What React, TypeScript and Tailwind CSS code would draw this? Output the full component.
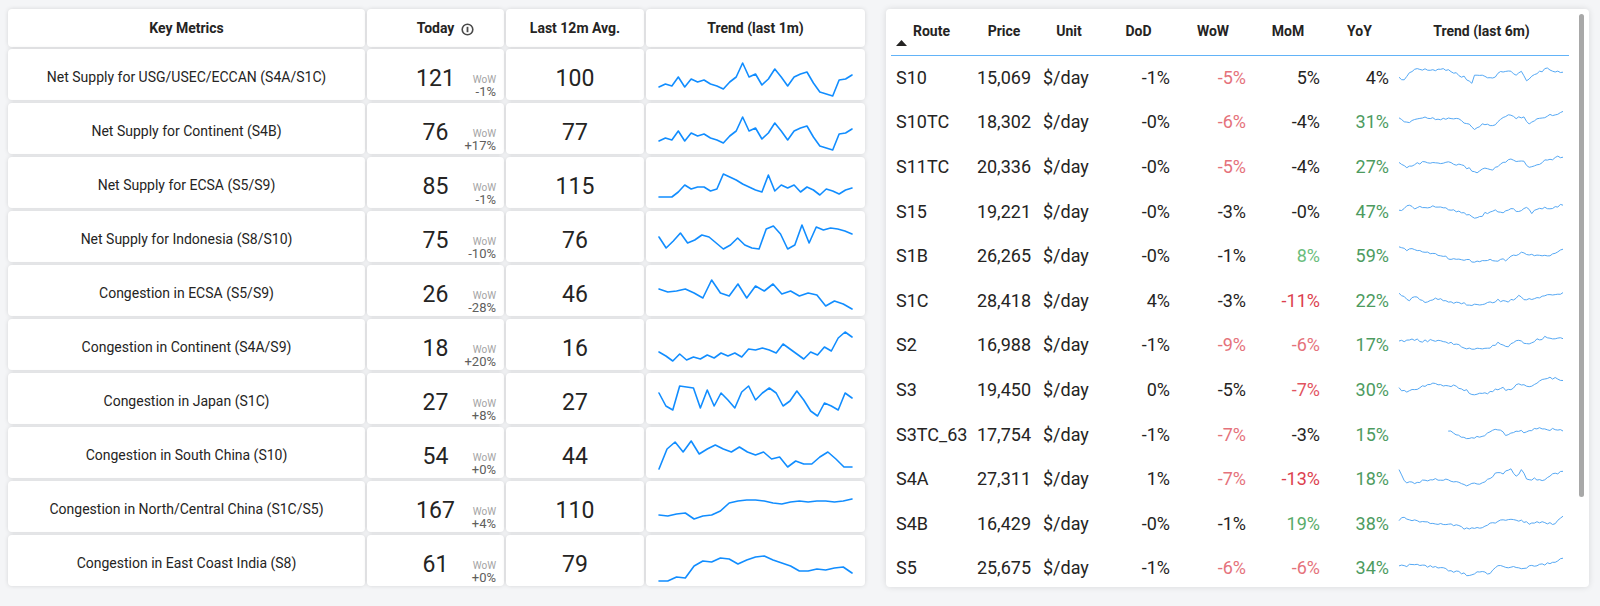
import React from 'react';

type Metric = { label: string; today: number; wow: string; avg: number; trend: number[] };

const metrics: Metric[] = [
  { label: 'Net Supply for USG/USEC/ECCAN (S4A/S1C)', today: 121, wow: '-1%', avg: 100, trend: [38, 35, 37, 28, 38, 30, 33, 31, 35, 37, 40, 33, 28, 14, 28, 25, 36, 30, 20, 28, 37, 28, 25, 23, 34, 43, 45, 47, 31, 30, 26] },
  { label: 'Net Supply for Continent (S4B)', today: 76, wow: '+17%', avg: 77, trend: [38, 35, 37, 28, 38, 30, 33, 31, 35, 37, 40, 33, 28, 14, 28, 25, 36, 30, 20, 28, 37, 28, 25, 23, 34, 43, 45, 47, 31, 30, 26] },
  { label: 'Net Supply for ECSA (S5/S9)', today: 85, wow: '-1%', avg: 115, trend: [40, 40, 40, 35, 28, 32, 30, 30, 34, 32, 17, 20, 23, 27, 30, 33, 35, 18, 34, 28, 31, 28, 35, 30, 33, 38, 32, 34, 37, 33, 31] },
  { label: 'Net Supply for Indonesia (S8/S10)', today: 75, wow: '-10%', avg: 76, trend: [26, 37, 30, 22, 32, 29, 24, 26, 32, 38, 34, 27, 34, 37, 38, 18, 15, 23, 38, 34, 14, 32, 16, 19, 17, 18, 20, 23] },
  { label: 'Congestion in ECSA (S5/S9)', today: 26, wow: '-28%', avg: 46, trend: [24, 27, 26, 24, 28, 33, 15, 28, 31, 19, 33, 21, 26, 19, 29, 26, 31, 28, 30, 41, 36, 39, 44] },
  { label: 'Congestion in Continent (S4A/S9)', today: 18, wow: '+20%', avg: 16, trend: [33, 37, 42, 35, 41, 38, 40, 36, 39, 34, 37, 34, 38, 30, 31, 29, 31, 34, 25, 30, 35, 40, 33, 36, 28, 32, 19, 13, 18] },
  { label: 'Congestion in Japan (S1C)', today: 27, wow: '+8%', avg: 27, trend: [20, 33, 37, 13, 14, 15, 35, 17, 33, 20, 27, 35, 19, 13, 27, 20, 15, 20, 33, 28, 18, 27, 38, 43, 30, 33, 37, 20, 25] },
  { label: 'Congestion in South China (S10)', today: 54, wow: '+0%', avg: 44, trend: [42, 22, 15, 25, 14, 27, 22, 18, 22, 25, 20, 25, 28, 25, 32, 30, 40, 34, 37, 37, 30, 25, 32, 40, 40] },
  { label: 'Congestion in North/Central China (S1C/S5)', today: 167, wow: '+4%', avg: 110, trend: [34, 35, 33, 32, 38, 35, 34, 30, 22, 20, 19, 19, 20, 22, 23, 21, 20, 21, 20, 20, 21, 20, 18] },
  { label: 'Congestion in East Coast India (S8)', today: 61, wow: '+0%', avg: 79, trend: [46, 46, 42, 43, 31, 26, 27, 23, 24, 29, 25, 22, 21, 25, 28, 31, 36, 36, 34, 35, 33, 32, 38] },
];

type Tone = 'k' | 'r' | 'R' | 'm' | 'g' | 'G' | 'h';

const tone: Record<Tone, string> = {
  k: 'text-[#252423]',
  r: 'text-[#e5727b]',
  R: 'text-[#dc3f4e]',
  m: 'text-[#e2545f]',
  g: 'text-[#6abd7c]',
  G: 'text-[#4d9b5f]',
  h: 'text-[#58ab69]',
};

type Route = {
  route: string;
  price: string;
  dod: string;
  wow: [string, Tone];
  mom: [string, Tone];
  yoy: [string, Tone];
  keys: [number, number][];
  start?: number;
};

const routes: Route[] = [
  { route: 'S10', price: '15,069', dod: '-1%', wow: ['-5%', 'r'], mom: ['5%', 'k'], yoy: ['4%', 'k'],
    keys: [[0, 1], [0.03, 3], [0.07, -5], [0.1, -9], [0.14, -7], [0.2, -7], [0.3, -8], [0.36, -2], [0.4, 0], [0.44, 7], [0.46, -1], [0.5, -2], [0.56, 2], [0.62, -5], [0.66, -7], [0.71, -2], [0.74, -6], [0.78, 3], [0.8, 0], [0.85, -4], [0.9, -9], [0.95, -5], [1, -6]] },
  { route: 'S10TC', price: '18,302', dod: '-0%', wow: ['-6%', 'r'], mom: ['-4%', 'k'], yoy: ['31%', 'G'],
    keys: [[0, -3], [0.04, 1], [0.1, -3], [0.17, -5], [0.22, -3], [0.3, -4], [0.37, -2], [0.42, 2], [0.47, 8], [0.5, 3], [0.58, 3], [0.63, -4], [0.68, -7], [0.72, -4], [0.76, -6], [0.79, 2], [0.85, -3], [0.9, -6], [0.95, -8], [1, -10]] },
  { route: 'S11TC', price: '20,336', dod: '-0%', wow: ['-5%', 'r'], mom: ['-4%', 'k'], yoy: ['27%', 'G'],
    keys: [[0, -3], [0.04, 1], [0.1, -2], [0.17, -4], [0.22, -2], [0.3, -3], [0.37, -1], [0.42, 2], [0.47, 7], [0.5, 3], [0.58, 3], [0.63, -3], [0.68, -6], [0.72, -4], [0.76, -5], [0.79, 2], [0.85, -2], [0.9, -6], [0.95, -8], [1, -10]] },
  { route: 'S15', price: '19,221', dod: '-0%', wow: ['-3%', 'k'], mom: ['-0%', 'k'], yoy: ['47%', 'G'],
    keys: [[0, 0], [0.06, -5], [0.1, -3], [0.2, -4], [0.28, -3], [0.36, 0], [0.42, 3], [0.47, 8], [0.52, 3], [0.58, -1], [0.62, 2], [0.68, -2], [0.73, 0], [0.78, -3], [0.81, 2], [0.85, -2], [0.92, -3], [1, -6]] },
  { route: 'S1B', price: '26,265', dod: '-0%', wow: ['-1%', 'k'], mom: ['8%', 'g'], yoy: ['59%', 'G'],
    keys: [[0, -8], [0.05, -6], [0.1, -7], [0.2, -3], [0.3, 2], [0.38, 3], [0.45, 5], [0.55, 4], [0.65, 4], [0.72, -2], [0.76, -3], [0.82, -1], [0.88, 0], [0.94, -1], [1, -6]] },
  { route: 'S1C', price: '28,418', dod: '4%', wow: ['-3%', 'k'], mom: ['-11%', 'R'], yoy: ['22%', 'G'],
    keys: [[0, -8], [0.05, 1], [0.1, -3], [0.16, 2], [0.22, -2], [0.28, 0], [0.35, 3], [0.47, 5], [0.53, 4], [0.6, 0], [0.66, 2], [0.73, -4], [0.78, 0], [0.85, -3], [0.92, -5], [1, -7]] },
  { route: 'S2', price: '16,988', dod: '-1%', wow: ['-9%', 'r'], mom: ['-6%', 'r'], yoy: ['17%', 'G'],
    keys: [[0, -3], [0.07, -6], [0.14, -4], [0.25, -5], [0.3, -3], [0.35, 0], [0.45, 5], [0.55, 3], [0.6, -2], [0.66, 2], [0.72, -4], [0.78, -1], [0.84, -5], [0.9, -8], [0.95, -6], [1, -7]] },
  { route: 'S3', price: '19,450', dod: '0%', wow: ['-5%', 'k'], mom: ['-7%', 'm'], yoy: ['30%', 'G'],
    keys: [[0, -1], [0.05, 4], [0.1, 0], [0.2, -5], [0.3, -4], [0.35, -3], [0.45, 5], [0.55, 4], [0.62, -1], [0.67, 1], [0.73, -5], [0.8, -3], [0.88, -10], [0.95, -11], [1, -9]] },
  { route: 'S3TC_63', price: '17,754', dod: '-1%', wow: ['-7%', 'r'], mom: ['-3%', 'k'], yoy: ['15%', 'G'], start: 0.3,
    keys: [[0.3, -4], [0.36, 2], [0.42, 5], [0.5, 2], [0.56, -2], [0.6, -5], [0.65, 1], [0.72, -3], [0.78, -2], [0.85, -7], [0.9, -4], [0.95, -5], [1, -4]] },
  { route: 'S4A', price: '27,311', dod: '1%', wow: ['-7%', 'r'], mom: ['-13%', 'R'], yoy: ['18%', 'G'],
    keys: [[0, -10], [0.04, 3], [0.1, 4], [0.2, 0], [0.3, 1], [0.42, 6], [0.5, 4], [0.55, 0], [0.6, -8], [0.63, -5], [0.68, -10], [0.72, -3], [0.75, -9], [0.78, 0], [0.85, 0], [0.87, 3], [0.9, -2], [1, -8]] },
  { route: 'S4B', price: '16,429', dod: '-0%', wow: ['-1%', 'k'], mom: ['19%', 'h'], yoy: ['38%', 'G'],
    keys: [[0, -3], [0.03, -5], [0.1, -3], [0.2, 0], [0.3, 1], [0.42, 6], [0.5, 4], [0.55, 1], [0.63, -3], [0.68, -5], [0.75, -2], [0.8, 1], [0.85, -1], [0.9, 1], [0.95, 0], [1, -8]] },
  { route: 'S5', price: '25,675', dod: '-1%', wow: ['-6%', 'r'], mom: ['-6%', 'r'], yoy: ['34%', 'G'],
    keys: [[0, -2], [0.07, -3], [0.15, -2], [0.25, 0], [0.35, 4], [0.42, 7], [0.5, 4], [0.55, 5], [0.6, -2], [0.68, -1], [0.75, 0], [0.85, -3], [0.92, -5], [1, -9]] },
];

const rnd = (i: number, s: number) => {
  const x = Math.sin(i * 12.9898 + s * 78.233) * 43758.5453;
  return (x - Math.floor(x)) * 2 - 1;
};

function sample(keys: [number, number][], t: number) {
  for (let k = 1; k < keys.length; k++) {
    const [t0, y0] = keys[k - 1];
    const [t1, y1] = keys[k];
    if (t <= t1) return y0 + ((t - t0) / (t1 - t0 || 1)) * (y1 - y0);
  }
  return keys[keys.length - 1][1];
}

function TrendLine({ data }: { data: number[] }) {
  const pts = data.map((v, i) => `${13 + (i * 193) / (data.length - 1)},${v}`).join(' ');
  return (
    <svg width="219" height="51" className="block">
      <polyline points={pts} fill="none" stroke="#118dff" strokeWidth="1.6" strokeLinejoin="round" strokeLinecap="round" />
    </svg>
  );
}

function RouteSpark({ keys, start = 0, seed }: { keys: [number, number][]; start?: number; seed: number }) {
  const n = Math.round(64 * (1 - start));
  const pts: string[] = [];
  for (let i = 0; i < n; i++) {
    const t = start + ((1 - start) * i) / (n - 1);
    const y = 21 + sample(keys, t) + rnd(i, seed) * 1.3;
    pts.push(`${5 + t * 164},${y.toFixed(1)}`);
  }
  return (
    <svg width="175" height="44" className="block">
      <polyline points={pts.join(' ')} fill="none" stroke="#55a8f4" strokeWidth="1" strokeLinejoin="round" />
    </svg>
  );
}

function InfoIcon() {
  return (
    <svg width="13" height="13" viewBox="0 0 13 13" className="block">
      <circle cx="6.5" cy="6.5" r="5.3" fill="none" stroke="#4a4a4a" strokeWidth="1.6" />
      <line x1="6.5" y1="3.8" x2="6.5" y2="9.2" stroke="#4a4a4a" strokeWidth="1.8" />
    </svg>
  );
}

const cell = 'bg-white rounded-[4px] shadow-[0_0_4px_rgba(0,0,0,0.13)]';
const leftCols = 'grid grid-cols-[357px_137px_138px_219px] gap-x-[2px]';
const rightCols = 'grid grid-cols-[81px_64px_66px_73px_76px_74px_69px_175px]';

function KeyMetrics() {
  return (
    <div className="w-[857px] flex flex-col">
      <div className={`${leftCols} h-[38px] mb-[2px] text-[14px] font-bold text-[#252423]`}>
        <div className={`${cell} flex items-center justify-center`}>Key Metrics</div>
        <div className={`${cell} flex items-center justify-center`}>
          <span className="relative">
            Today
            <span className="absolute left-full top-[5px] ml-[7px]">
              <InfoIcon />
            </span>
          </span>
        </div>
        <div className={`${cell} flex items-center justify-center`}>Last 12m Avg.</div>
        <div className={`${cell} flex items-center justify-center`}>Trend (last 1m)</div>
      </div>
      <div className="flex flex-col gap-[3px]">
        {metrics.map((m) => (
          <div key={m.label} className={`${leftCols} h-[51px] text-[#252423]`}>
            <div className={`${cell} flex items-center justify-center pt-[5px] text-[14px]`}>{m.label}</div>
            <div className={`${cell} grid grid-cols-[1fr_auto_1fr]`}>
              <div />
              <div className="self-center pt-[8px] text-[23px] leading-[27px]">{m.today}</div>
              <div className="self-end mb-[1px] pr-[8px] flex flex-col items-end">
                <span className="text-[10px] leading-[11px] text-[#a3a3a3]">WoW</span>
                <span className="text-[13px] leading-[14px] text-[#605e5c]">{m.wow}</span>
              </div>
            </div>
            <div className={`${cell} flex items-center justify-center pt-[8px] text-[23px] leading-[27px]`}>{m.avg}</div>
            <div className={cell}>
              <TrendLine data={m.trend} />
            </div>
          </div>
        ))}
      </div>
    </div>
  );
}

function RouteTable() {
  return (
    <div className="w-[703px] h-[578px] overflow-hidden bg-white rounded-[4px] shadow-[0_0_6px_rgba(0,0,0,0.12)] flex px-[5px]">
      <div className="w-[678px] shrink-0">
        <div className={`${rightCols} h-[47px] border-b border-[#62b3f8] text-[14px] font-bold text-[#252423] leading-[16px]`}>
          <div className="pt-[14px] flex flex-col">
            <span className="text-center">Route</span>
            <svg width="11" height="6" viewBox="0 0 11 6" className="block mt-[1px] ml-[5px]">
              <polygon points="0,6 5.5,0 11,6" fill="#252423" />
            </svg>
          </div>
          {['Price', 'Unit', 'DoD', 'WoW', 'MoM', 'YoY', 'Trend (last 6m)'].map((h) => (
            <div key={h} className="pt-[14px] text-center">{h}</div>
          ))}
        </div>
        {routes.map((r, i) => (
          <div key={r.route} className={`${rightCols} h-[44.6px] items-center text-[18px] text-[#252423]`}>
            <div className="pl-[5px] pb-[2px]">{r.route}</div>
            <div className="pr-[5px] pb-[2px] text-right">{r.price}</div>
            <div className="pl-[7px] pb-[2px]">$/day</div>
            <div className="pr-[5px] pb-[2px] text-right">{r.dod}</div>
            <div className={`pr-[5px] pb-[2px] text-right ${tone[r.wow[1]]}`}>{r.wow[0]}</div>
            <div className={`pr-[5px] pb-[2px] text-right ${tone[r.mom[1]]}`}>{r.mom[0]}</div>
            <div className={`pr-[5px] pb-[2px] text-right ${tone[r.yoy[1]]}`}>{r.yoy[0]}</div>
            <div>
              <RouteSpark keys={r.keys} start={r.start} seed={i + 1} />
            </div>
          </div>
        ))}
      </div>
      <div className="ml-[10px] w-[5px] shrink-0">
        <div className="mt-[5px] h-[483px] rounded-full bg-[#a8a8a8]" />
      </div>
    </div>
  );
}

export default function App() {
  return (
    <div className="min-h-[606px] bg-[#f4f5f7] flex items-start gap-[21px] pt-[9px] pl-[8px] font-[family-name:Roboto,sans-serif]">
      <KeyMetrics />
      <RouteTable />
    </div>
  );
}
